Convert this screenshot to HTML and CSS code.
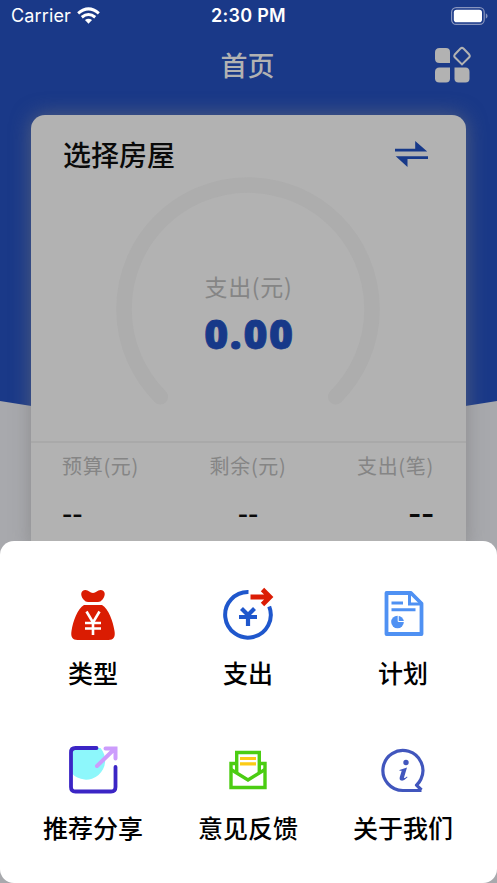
FILE: index.html
```html
<!DOCTYPE html>
<html lang="zh-CN">
<head>
<meta charset="utf-8">
<meta name="viewport" content="width=device-width, initial-scale=1">
<title>首页</title>
<link rel="stylesheet" href="styles.css">
</head>
<body>
<main class="screen">
  <svg class="backdrop" viewBox="0 0 497 883" aria-hidden="true">
    <path class="backdrop-fill" d="M0 0H497V401Q248 443 0 401Z"/>
  </svg>
  <header class="status">
    <div class="carrier">Carrier
      <svg width="23" height="18" viewBox="0 0 24 18">
        <g fill="none" stroke="#fff" stroke-width="3.1"><path d="M1.2 6.2Q12 -3 22.8 6.2"/><path d="M5 10.3Q12 4.4 19 10.3"/></g>
        <path fill="#fff" d="M8.3 13.3Q12 10.3 15.7 13.3L12 17.2Z"/>
      </svg>
    </div>
    <div class="clock">2:30 PM</div>
    <svg class="battery" width="37" height="18" viewBox="0 0 37 18">
      <rect x=".6" y=".6" width="32.6" height="16.8" rx="4.6" fill="none" stroke="#8895be" stroke-width="1.2"/>
      <rect x="2.8" y="2.8" width="28.2" height="12.4" rx="2.8" fill="#fff"/>
      <path fill="#8895be" d="M34.8 6.3Q36.6 7.2 36.6 9T34.8 11.7Z"/>
    </svg>
  </header>
  <div class="nav">
    <h1>首页</h1>
    <svg class="apps" width="38" height="38" viewBox="0 0 38 38">
      <g fill="#b2b2b2">
        <path d="M5.500 2H12Q16 2 16 6V17H5.500Q1 17 1 12.500V6.500Q1 2 5.500 2Z"/>
        <path d="M5.500 21.500H16V32.500Q16 36.500 12 36.500H5.500Q1 36.500 1 32.500V26Q1 21.500 5.500 21.500Z"/>
        <path d="M20.500 21.500H31.500Q35.500 21.500 35.500 26V32.500Q35.500 36.500 31.500 36.500H24.500Q20.500 36.500 20.500 32.500Z"/>
      </g>
      <path d="M26.500 2.500Q28 1.200 29.500 2.500L35.200 8.500Q36.300 9.900 35.200 11.300L28 18.400L20.800 11.300Q19.700 9.900 20.800 8.500Z" fill="none" stroke="#b2b2b2" stroke-width="2"/>
    </svg>
  </div>
  <section class="card">
    <div class="card-head">
      <h2>选择房屋</h2>
      <svg width="34" height="28" viewBox="0 0 34 28" fill="#173989">
        <path d="M1 8.800H21.200V1L33.200 11.600H1Z"/><path d="M34 16.300H1.700L13.500 27V19.100H34Z"/>
      </svg>
    </div>
    <div class="gauge">
      <svg width="264" height="236" viewBox="0 0 264 236">
        <path d="M44.320 219.680A124 124 0 1 1 219.680 219.680" fill="none" stroke="#adadad" stroke-width="15.500" stroke-linecap="round"/>
      </svg>
      <div class="gauge-text"><span>支出(元)</span><strong>0.00</strong></div>
    </div>
    <div class="stats">
      <div><span>预算(元)</span><b>--</b></div>
      <div><span>剩余(元)</span><b>--</b></div>
      <div><span>支出(笔)</span><b class="count">--</b></div>
    </div>
  </section>
  <nav class="sheet">
    <a class="item">
      <svg width="56" height="56" viewBox="0 0 56 56">
        <path fill="#da1c02" d="M18.500 12.500C15 8.500 15.500 3 20.500 3C23.500 3 25 6 28 6C31 6 32.500 3 35.500 3C40.500 3 41 8.500 37.500 12.500Q35.500 15 33 15H23Q20.500 15 18.500 12.500ZM19 18H37C43.500 22 48 34 49.500 44C50.500 50 48.500 53 43.500 53H12.500C7.500 53 5.500 50 6.500 44C8 34 12.500 22 19 18Z"/>
        <path fill="none" stroke="#fff" stroke-width="2.600" d="M21.500 24.500L28 35.500L34.500 24.500M28 35V48M20 36H36M20 41.500H36"/>
      </svg><span>类型</span>
    </a>
    <a class="item">
      <svg width="56" height="56" viewBox="0 0 56 56">
        <path d="M28.500 5A22.800 22.800 0 1 0 49.200 19.500" fill="none" stroke="#1f57cc" stroke-width="4"/>
        <path d="M21.500 21.500L28 28L34.500 21.500M28 27V39M19 30H37" fill="none" stroke="#1f57cc" stroke-width="4.200"/>
        <path d="M30.500 10H49.500M42.500 2.500L50 10L42.500 17.500" fill="none" stroke="#db1d05" stroke-width="4.800"/>
      </svg><span>支出</span>
    </a>
    <a class="item">
      <svg width="56" height="56" viewBox="0 0 56 56">
        <g fill="none" stroke="#4f91f3"><path stroke-width="3.800" stroke-linejoin="round" d="M11.500 6H36L46.500 16.500V47H11.500Z"/><path stroke-width="3" d="M34.500 6V17H46.500M16.500 16H28M16.500 22.700H40.500"/></g>
        <circle cx="22.500" cy="35" r="6.300" fill="#4f91f3"/><path d="M23.200 28V34.500H29.800" fill="none" stroke="#fff" stroke-width="1"/>
      </svg><span>计划</span>
    </a>
    <a class="item">
      <svg width="56" height="56" viewBox="0 0 56 56">
        <path fill="#8df7fb" d="M6.500 6H35.500A16.800 16.800 0 0 1 6.500 31Z"/>
        <path d="M31.500 6H10.500Q6 6 6 10.500V45Q6 49.500 10.500 49.500H46Q50.500 49.500 50.500 45V25" fill="none" stroke="#3b25c5" stroke-width="3.800" stroke-linecap="round"/>
        <path d="M32 24L49 7.500M40.500 6.500H50.500V16.500" fill="none" stroke="#cc9cfc" stroke-width="4" stroke-linecap="round"/>
      </svg><span>推荐分享</span>
    </a>
    <a class="item">
      <svg width="56" height="56" viewBox="0 0 56 56">
        <g fill="none" stroke="#4bcd12" stroke-width="3.400"><path d="M16.500 21.500H11V45.500H45V21.500H39.500"/><path d="M16.700 30V10.500H39.300V30"/><path d="M11 27.500L28 38L45 27.500"/></g>
        <path d="M20 16.500H36M20 21.800H36" stroke="#fccb16" stroke-width="3.200"/>
      </svg><span>意见反馈</span>
    </a>
    <a class="item">
      <svg width="56" height="56" viewBox="0 0 56 56">
        <path d="M46.500 48.500H28A20 20 0 1 1 46 37Q44.500 40.500 41.500 43.200L46.500 48" fill="none" stroke="#4156bd" stroke-width="3.200" stroke-linejoin="round"/>
        <circle cx="31" cy="20.500" r="2.700" fill="#4156bd"/>
        <path d="M24.500 28L32 25.500L29 35.500Q28.800 37 32 34.500L32.500 35.300Q29 39 26.500 38.600Q24 38 24.800 35L26.700 28.800L24.500 28.800Z" fill="#4156bd"/>
      </svg><span>关于我们</span>
    </a>
  </nav>
</main>
</body>
</html>
```
FILE: styles.css
```css
* { box-sizing: border-box; }
body { margin: 0; font-family: "Noto Sans CJK SC", sans-serif; }
h1, h2 { margin: 0; font-weight: 500; }
svg { display: block; flex: none; }
.screen { position: relative; width: 497px; height: 883px; background: #a8a9ad; overflow: hidden; display: flex; flex-direction: column; isolation: isolate; }
.backdrop { position: absolute; inset: 0; z-index: -1; }
.backdrop-fill { fill: #1a3988; }
.status { height: 32px; flex: none; display: grid; grid-template-columns: 1fr auto 1fr; align-items: center; padding: 0 10px 0 11px; color: #fff; font-family: Inter, sans-serif; font-size: 18px; line-height: 32px; }
.carrier { display: flex; align-items: center; gap: 6px; letter-spacing: .15px; }
.clock { font-weight: 600; letter-spacing: .25px; padding-right: 1px; }
.battery { justify-self: end; margin: 0 -1px 1px 0; }
.nav { height: 83px; flex: none; display: grid; grid-template-columns: 1fr auto 1fr; padding: 0 25px 0 24px; }
.nav h1 { grid-column: 2; color: #b2b2b2; font-size: 27px; line-height: 40px; padding: 13px 1px 0 0; }
.apps { justify-self: end; margin-top: 14px; }
.card { width: 435px; height: 440px; flex: none; margin-left: 31px; border-radius: 14px; background: #b2b2b2; box-shadow: 0 0 20px rgba(120, 120, 120, .6); }
.card-head { height: 62px; display: flex; justify-content: space-between; align-items: flex-start; padding: 18px 38px 0 32px; }
.card-head h2 { font-size: 28px; line-height: 42px; color: #0a0a0a; }
.card-head svg { margin-top: 7px; }
.gauge { height: 264px; display: grid; justify-content: center; padding-right: 1px; }
.gauge > * { grid-area: 1 / 1; }
.gauge-text { display: flex; flex-direction: column; align-items: center; padding-top: 92px; }
.gauge-text span { color: #858585; font-size: 23px; line-height: 34px; font-weight: 400; letter-spacing: .7px; padding-left: 1px; }
.gauge-text strong { color: #173989; font-family: "Open Sans", sans-serif; font-weight: 800; font-size: 41px; line-height: 60px; letter-spacing: 1.7px; padding-left: 3px; -webkit-text-stroke: .8px #173989; }
.stats { height: 114px; border-top: 2px solid #a9a9a9; display: grid; grid-template-columns: repeat(3, 1fr); padding: 0 32px 0 31px; }
.stats div { display: flex; flex-direction: column; align-items: center; }
.stats div:first-child { align-items: flex-start; }
.stats div:last-child { align-items: flex-end; }
.stats span { padding-top: 8px; color: #858585; font-size: 20px; line-height: 30px; font-weight: 400; letter-spacing: .7px; }
.stats b { color: #0a0a0a; font-size: 29px; line-height: 40px; font-weight: 500; margin-top: 10px; }
.stats .count { font-size: 36px; margin-top: 9px; }
.sheet { position: absolute; left: 0; right: 0; bottom: 0; height: 342px; border-radius: 14px; background: #fff; display: grid; grid-template-columns: repeat(3, 155px); grid-auto-rows: 155px; justify-content: center; padding: 46px 1px 0 0; }
.item { display: flex; flex-direction: column; align-items: center; color: #000; }
.item span { font-size: 25px; line-height: 36px; font-weight: 500; margin-top: 11px; }
```
